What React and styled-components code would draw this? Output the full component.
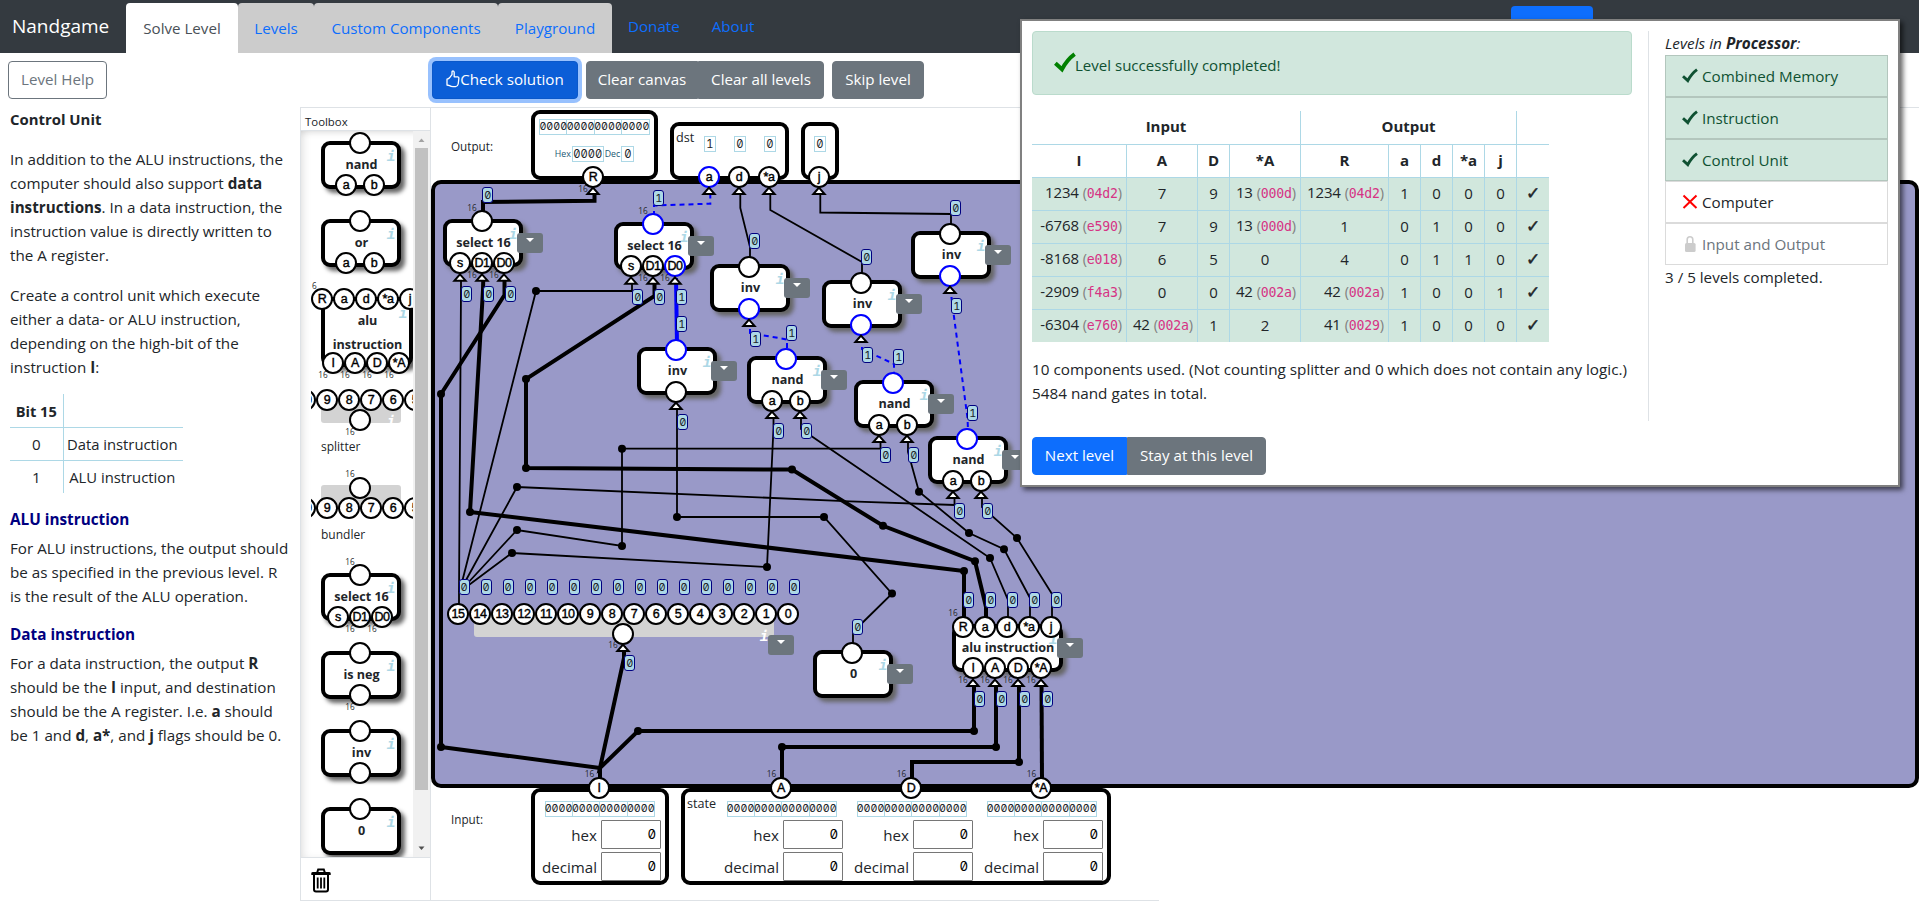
import React from "react";
import styled, { createGlobalStyle, css } from "styled-components";

const SANS = `"Open Sans", "Noto Sans", sans-serif`;
const MONO = `"DejaVu Sans Mono", monospace`;
const DIGITS = `Inter, "DejaVu Sans Mono", monospace`;

const Global = createGlobalStyle`
  *, *::before, *::after { box-sizing: border-box; }
  body {
    margin: 0;
    background: #fff;
    color: #212529;
    font: 15.15px/24px ${SANS};
    overflow: hidden;
  }
  p { margin: 0; }
  button { font: inherit; margin: 0; }
`;

const Page = styled.div`
  position: relative;
  display: flex;
  flex-direction: column;
  width: 1919px;
  height: 904px;
  overflow: hidden;
`;

/* ---------- header ---------- */

const Header = styled.header`
  display: flex;
  flex: none;
  height: 53px;
  padding-top: 3px;
  background: #343a40;
`;

const Brand = styled.div`
  width: 126px;
  padding-left: 12px;
  font-size: 19px;
  line-height: 46px;
  color: #fff;
  white-space: nowrap;
`;

const Tab = styled.div`
  width: ${(p) => p.$w}px;
  height: 50px;
  border-radius: 4px 4px 0 0;
  background: ${(p) => (p.$active ? "#fff" : "#ccc")};
  color: ${(p) => (p.$active ? "#495057" : "#0d6efd")};
  line-height: 50px;
  text-align: center;
  white-space: nowrap;
`;

const NavLink = styled.a`
  padding: 0 16px;
  line-height: 46px;
  color: #0d6efd;
`;

const NavButton = styled.div`
  width: 82px;
  height: 38px;
  margin: 3px 326px 0 auto;
  border-radius: 4px;
  background: #0d6efd;
`;

/* ---------- toolbar ---------- */

const Toolbar = styled.div`
  display: flex;
  flex: none;
  align-items: flex-start;
  height: 54px;
  padding: 8px 0 0 8px;
`;

const Button = styled.button`
  display: flex;
  align-items: center;
  justify-content: center;
  width: ${(p) => p.$w}px;
  height: 38px;
  padding: 0 0 2px;
  border: 1px solid #6c757d;
  border-radius: 4px;
  background: #6c757d;
  color: #fff;
  white-space: nowrap;
  ${(p) => p.$kind === "outline" && css`background: #fff; color: #6c757d;`}
  ${(p) => p.$kind === "primary" && css`background: #0d6efd; border-color: #0d6efd;`}
  ${(p) => p.$kind === "focused" && css`
    background: #0b5ed7;
    border-color: #0a58ca;
    box-shadow: 0 0 0 4px rgba(49, 132, 253, 0.5);
  `}
`;

const ButtonGroup = styled.div`
  display: flex;
  margin-left: ${(p) => p.$ml || 0}px;
  ${Button}:not(:last-child) { border-radius: 4px 0 0 4px; }
  ${Button}:not(:first-child) { border-radius: 0 4px 4px 0; }
`;

/* ---------- description ---------- */

const Main = styled.main`
  display: flex;
  flex: none;
  height: 794px;
`;

const Help = styled.section`
  flex: none;
  width: 300px;
  padding: 0 0 0 10px;
  white-space: nowrap;
`;

const HelpTitle = styled.h1`
  margin: 0 0 16px;
  font-size: 14.9px;
  line-height: 24px;
`;

const HelpHeading = styled.h2`
  margin: ${(p) => p.$mt}px 0 5px;
  font-size: 15.3px;
  line-height: 24px;
  color: navy;
`;

const Para = styled.p`
  margin-bottom: ${(p) => p.$mb || 0}px;
  font-size: 15.2px;
  line-height: 24px;
`;

const BitTable = styled.table`
  border-collapse: collapse;
  th, td {
    height: 33px;
    padding: 0 4px;
    line-height: 24px;
    text-align: center;
    border-bottom: 1px solid lightblue;
  }
  tr:last-child td { border-bottom: 0; }
  th:first-child, td:first-child { width: 53px; border-right: 1px solid lightblue; }
  td:last-child { width: 120px; padding: 0 5px 0 3px; font-size: 14.8px; }
  th { padding-top: 2px; font-size: 14.6px; }
`;

/* ---------- toolbox ---------- */

const ToolboxPanel = styled.aside`
  display: flex;
  flex: none;
  flex-direction: column;
  width: 131px;
  height: 794px;
  border: 1px solid #dee2e6;
`;

const ToolboxTitle = styled.div`
  height: 23px;
  padding-left: 4px;
  border-bottom: 1px solid #dee2e6;
  font-size: 11.4px;
  line-height: 27px;
`;

const ToolScroll = styled.div`
  display: flex;
  height: 726px;
  box-shadow: inset 5px 0 8px -3px rgba(0, 0, 0, 0.12), inset 0 6px 8px -6px rgba(0, 0, 0, 0.15);
`;

const ToolList = styled.div`
  position: relative;
  width: 102px;
  margin-left: 10px;
  overflow: hidden;
`;

const Scrollbar = styled.div`
  display: flex;
  flex-direction: column;
  justify-content: space-between;
  align-items: flex-end;
  width: 17px;
  background: #f1f1f1;
`;

const ScrollThumb = styled.div`
  width: 13px;
  height: 642px;
  margin-right: 2px;
  background: #c1c1c1;
`;

const ScrollArrow = styled.svg`
  display: block;
  width: 17px;
  height: ${(p) => p.$h}px;
  flex: none;
`;

const ToolLabel = styled.div`
  position: absolute;
  left: 10px;
  top: ${(p) => p.$y}px;
  font-size: 12px;
  line-height: 18px;
`;

const Bin = styled.div`
  display: flex;
  align-items: flex-start;
  flex: 1;
  padding: 10px 0 0 10px;
  border-top: 1px solid #dee2e6;
`;

/* ---------- circuit parts ---------- */

const Body = styled.div`
  position: absolute;
  left: ${(p) => p.$x}px;
  top: ${(p) => p.$y}px;
  width: ${(p) => p.$w}px;
  height: ${(p) => p.$h}px;
  border: 4px solid #000;
  border-radius: 9px;
  background: #fff;
  box-shadow: 4px 4px 4px #666;
`;

const Strip = styled.div`
  position: absolute;
  left: ${(p) => p.$x}px;
  top: ${(p) => p.$y}px;
  width: ${(p) => p.$w}px;
  height: ${(p) => p.$h}px;
  border-radius: 3px;
  background: #d3d3d3;
`;

const Caption = styled.div`
  position: absolute;
  left: ${(p) => p.$x - 65}px;
  top: ${(p) => p.$y - 12}px;
  width: 130px;
  font-size: 12.6px;
  line-height: 24px;
  font-weight: 700;
  text-align: center;
  white-space: pre;
`;

const Info = styled.div`
  position: absolute;
  left: ${(p) => p.$x - 6}px;
  top: ${(p) => p.$y - 9}px;
  width: 12px;
  font: italic 700 14.5px/18px ${MONO};
  color: ${(p) => p.$c || "lightblue"};
  text-align: center;
`;

const Pin = styled.div`
  position: absolute;
  left: ${(p) => Math.round(p.$x - 11)}px;
  top: ${(p) => Math.round(p.$y - 10.5)}px;
  width: 22px;
  height: 22px;
  border: 2px solid ${(p) => (p.$on ? "#00f" : "#000")};
  border-radius: 50%;
  background: #fff;
  color: #000;
  font: 12.5px/18px "Liberation Sans", Arial, sans-serif;
  letter-spacing: -0.4px;
  -webkit-text-stroke: 0.4px #000;
  display: flex;
  justify-content: center;
  white-space: nowrap;
`;

const Width16 = styled.div`
  position: absolute;
  left: ${(p) => p.$x - 10}px;
  top: ${(p) => p.$y - 6}px;
  width: 20px;
  font-size: 8.2px;
  line-height: 12px;
  color: #212529;
  text-align: center;
`;

const Value = styled.div`
  position: absolute;
  left: ${(p) => p.$x}px;
  top: ${(p) => p.$y}px;
  width: 11px;
  height: 16px;
  border: 1px solid navy;
  border-radius: 3px;
  background: lightblue;
  color: #212529;
  font: 11px/14px ${DIGITS};
  font-feature-settings: "zero", "tnum";
  display: flex;
  justify-content: center;
`;

const MenuButton = styled.div`
  position: absolute;
  left: ${(p) => p.$x}px;
  top: ${(p) => p.$y}px;
  width: 26px;
  height: 20px;
  padding: 5px 0 0 9px;
  border-radius: 3px;
  background: #6c757d;
  &::after {
    content: "";
    display: block;
    width: 0;
    border: 4px solid transparent;
    border-top-color: #fff;
    border-bottom: 0;
  }
`;

function Part({ x, y, w = 80, h = 48, name, capY = 24, outs = [], ins = [], menu, wired, infoY = 15 }) {
  const cx = x + 39;
  const top = y + 1.9;
  const bottom = y + h - 4.3;
  return (
    <>
      <Body $x={x} $y={y} $w={w} $h={h} />
      <Info $x={x + w - 10} $y={y + infoY}>i</Info>
      <Caption $x={x + w / 2 + 0.5} $y={y + capY}>{name}</Caption>
      {menu && <MenuButton $x={x + w - 6} $y={y + 14} />}
      {outs.map((o, i) => (
        <React.Fragment key={i}>
          {o.wide && <Width16 $x={(o.x ?? cx) - 10} $y={top - 13}>{o.wide}</Width16>}
          <Pin $x={o.x ?? cx} $y={top} $on={o.on}>{o.t}</Pin>
          {wired && <Value $x={(o.x ?? cx) + 0.3} $y={top - 33.7}>{o.on ? 1 : 0}</Value>}
        </React.Fragment>
      ))}
      {ins.map((o, i) => (
        <React.Fragment key={i}>
          {o.wide && <Width16 $x={(o.x ?? cx) - 10} $y={bottom + 12.5}>{o.wide}</Width16>}
          <Pin $x={o.x ?? cx} $y={bottom} $on={o.on}>{o.t}</Pin>
          {wired && <Value $x={(o.x ?? cx) + 1.4} $y={bottom + 23}>{o.on ? 1 : 0}</Value>}
        </React.Fragment>
      ))}
    </>
  );
}

/* ---------- workspace ---------- */

const Workspace = styled.section`
  display: flex;
  flex-direction: column;
  position: relative;
  width: 1488px;
  height: 794px;
  border-top: 1px solid #dee2e6;
`;

const BottomLine = styled.div`
  width: 728px;
  height: 1px;
  margin-top: 14px;
  background: #dee2e6;
`;

const TerminalRow = styled.div`
  display: flex;
  flex: none;
  align-items: ${(p) => (p.$top ? "flex-start" : "flex-end")};
  height: ${(p) => p.$h}px;
`;

const RowLabel = styled.div`
  width: 100px;
  padding-left: 20px;
  align-self: ${(p) => (p.$top ? "flex-start" : "auto")};
  margin: ${(p) => (p.$top ? "22px 0 0" : "0 0 25px")};
  font-size: 11.7px;
  line-height: 18px;
`;

const TerminalBox = styled.div`
  display: flex;
  width: ${(p) => p.$w}px;
  height: ${(p) => p.$h}px;
  margin-left: ${(p) => p.$ml || 0}px;
  border: 4px solid #000;
  border-radius: 9px;
  background: #fff;
`;

const OutputContent = styled.div`
  display: flex;
  flex-direction: column;
  align-items: center;
  width: 100%;
  padding-top: ${(p) => p.$pt || 5}px;
`;

const SmallRow = styled.div`
  display: flex;
  align-items: center;
  gap: 1px;
  margin-top: 7px;
  font-size: 8.8px;
  color: #1b5873;
`;

const Digits = styled.span`
  display: flex;
  justify-content: center;
  width: ${(p) => p.$w}px;
  height: 16px;
  border: 1px solid lightblue;
  color: #212529;
  font: 11.2px/14px ${DIGITS};
  font-feature-settings: "zero", "tnum";
`;

const BitRow = styled.div`
  display: flex;
  ${Digits} { font-size: 10.7px; }
  ${Digits} + ${Digits} { border-left: 0; }
`;

const GroupName = styled.div`
  width: ${(p) => p.$w}px;
  padding-left: 2px;
  margin-top: ${(p) => p.$mt || 0}px;
  font-size: 12.6px;
  line-height: 24px;
`;

const FlagRow = styled.div`
  display: flex;
  gap: 18px;
  padding-top: 10px;
`;

const Board = styled.div`
  position: relative;
  flex: none;
  width: 1488px;
  height: 608px;
  border: 4px solid #000;
  border-radius: 10px;
  background: #9999c8;
`;

const Wires = styled.svg`
  position: absolute;
  left: -4px;
  top: -4px;
  overflow: visible;
`;

const Shift = styled.div`
  position: absolute;
  left: -435px;
  top: -184px;
`;

const InputColumn = styled.div`
  display: flex;
  flex-direction: column;
  align-items: flex-end;
  width: 130px;
  padding: 9px 4px 0 0;
  ${BitRow} { margin-right: 6px; }
`;

const Field = styled.label`
  display: flex;
  align-items: center;
  gap: 4px;
  height: 29px;
  margin-top: 3px;
  font-size: 15.1px;
  line-height: 24px;
`;

const FieldValue = styled.span`
  display: block;
  width: 60px;
  height: 29px;
  padding-right: 4px;
  border: 1px solid #767676;
  border-radius: 1px;
  background: #fff;
  color: #000;
  font: 13.3px/27px ${DIGITS};
  font-feature-settings: "zero", "tnum";
  text-align: right;
`;

function Bits({ w = 28 }) {
  return (
    <BitRow>
      {[0, 1, 2, 3].map((i) => (
        <Digits key={i} $w={i ? w - 0.5 : w}>0000</Digits>
      ))}
    </BitRow>
  );
}

function NumberInput() {
  return (
    <InputColumn>
      <Bits />
      <Field>hex<FieldValue>0</FieldValue></Field>
      <Field>decimal<FieldValue>0</FieldValue></Field>
    </InputColumn>
  );
}

const THICK = [
  "483,214 483,202 594.5,200.7 594.5,192",
  "483.3,278 483,290 470,512 964,571 964,618",
  "504.5,278 504.5,295 441,394 441,747 600,768 600,780",
  "654.5,280 654.5,296 526,379 526,468 792,469.6 883,525.8 975,561.2 986,607 986,618",
  "624,646 624,658 600,768 638,731 974,731 974,681",
  "782,780 782,747 996,747 996,681",
  "912,780 912,762 1019,762 1019,681",
  "1042,780 1041.5,681",
];
const THIN = [
  "740.3,192 740.3,208 750,247 750,260",
  "770.3,192 770.3,210 862,262 862,276",
  "820.3,192 820.3,212.5 951,214 951,226",
  "461,280 461,290 459,592 459,605",
  "632,282 632,291 536,291 459.5,592",
  "677,406 677,517 824,517 892,593.6 853,632 853,645",
  "773.5,414 773.5,428 767,567 512,553 459.5,592",
  "801,414 801,429 990,558 1008,600 1008,618",
  "880.5,440 880.5,448.7 622,448.7 622,546 517,530 459.5,592",
  "908,440 908,452 919,491.7 969,533 1004,549.2 1030,598 1030,618",
  "954.5,495 954.5,505 850,501.3 517,487 459.5,592",
  "982,495 982,507 1017,538 1052,594 1052,618",
];
const DASHED = [
  "654,216 654,205.5 710.3,203.7 710.3,192",
  "750,320 750,333 787,339.5 787,350",
  "862,338 862,349 894,364 894,375",
  "951,288 951.5,298 967.5,418 968,430",
];
const JOINTS = [
  [470, 512], [964, 571], [441, 394], [441, 747], [526, 379], [526, 468], [792, 469.6],
  [883, 525.8], [975, 561.2], [638, 731], [974, 731], [782, 747], [996, 747], [1019, 762],
  [536, 291], [677, 517], [824, 517], [892, 593.6], [767, 567], [512, 553], [990, 558],
  [622, 448.7], [622, 546], [517, 530], [919, 491.7], [969, 533], [1004, 549.2],
  [517, 487], [1017, 538],
];
const ARROWS = [
  [593, 176], [709, 176], [739, 176], [769, 176], [819, 176],
  [460, 262.7], [482, 262.7], [504, 262.7], [631, 265.7], [653, 265.7], [675, 265.7],
  [749, 308], [861, 324], [950, 275], [676, 391], [772, 400], [800, 400],
  [879, 424], [907, 424], [953, 480], [981, 480],
  [973, 668], [995, 668], [1018, 668], [1041, 668], [623, 633],
];

const PARTS = [
  { x: 443, y: 219, name: "select 16", outs: [{ wide: 16 }], ins: [{ x: 460, t: "s" }, { x: 482, t: "D1", wide: 16 }, { x: 504, t: "D0", wide: 16 }] },
  { x: 614, y: 222, name: "select 16", outs: [{ on: 1, wide: 16 }], ins: [{ x: 631, t: "s" }, { x: 653, t: "D1", wide: 16 }, { x: 675, t: "D0", on: 1, wide: 16 }] },
  { x: 710, y: 264.3, name: "inv", outs: [{}], ins: [{ on: 1 }] },
  { x: 822, y: 280.3, name: "inv", outs: [{}], ins: [{ on: 1 }] },
  { x: 911, y: 231.3, name: "inv", outs: [{}], ins: [{ on: 1 }] },
  { x: 637, y: 347.3, name: "inv", outs: [{ on: 1 }], ins: [{}] },
  { x: 747, y: 356.3, name: "nand", outs: [{ on: 1 }], ins: [{ x: 772, t: "a" }, { x: 800, t: "b" }] },
  { x: 854, y: 380.3, name: "nand", outs: [{ on: 1 }], ins: [{ x: 879, t: "a" }, { x: 907, t: "b" }] },
  { x: 928, y: 436.3, name: "nand", outs: [{ on: 1 }], ins: [{ x: 953, t: "a" }, { x: 981, t: "b" }] },
  { x: 813, y: 650.3, name: "0", outs: [{}] },
  {
    x: 952, y: 624.1, w: 111, name: "alu instruction",
    outs: [{ x: 963, t: "R", wide: 16 }, { x: 985, t: "a" }, { x: 1007, t: "d" }, { x: 1029, t: "*a" }, { x: 1051, t: "j" }],
    ins: [{ x: 973, t: "I", wide: 16 }, { x: 995, t: "A", wide: 16 }, { x: 1018, t: "D", wide: 16 }, { x: 1041, t: "*A", wide: 16 }],
  },
];

function Splitter() {
  const pins = Array.from({ length: 16 }, (_, i) => 15 - i);
  return (
    <>
      <Strip $x={474} $y={613} $w={300} $h={24} />
      <Info $x={764} $y={636} $c="#fff">i</Info>
      {pins.map((n, i) => (
        <React.Fragment key={n}>
          <Pin $x={458 + i * 22} $y={613}>{n}</Pin>
          <Value $x={458.6 + i * 22} $y={579.2}>0</Value>
        </React.Fragment>
      ))}
      <Width16 $x={613} $y={645}>16</Width16>
      <Pin $x={623} $y={633} />
      <Value $x={624.3} $y={655.4}>0</Value>
      <MenuButton $x={768} $y={635} />
    </>
  );
}

function Diagram() {
  return (
    <>
      <Wires width="1488" height="608" viewBox="431 180 1488 608" fill="none" stroke="#000">
        {THIN.map((p) => <polyline key={p} points={p} strokeWidth="1.8" />)}
        {THICK.map((p) => <polyline key={p} points={p} strokeWidth="4" />)}
        {DASHED.map((p) => <polyline key={p} points={p} stroke="#00f" strokeWidth="2" strokeDasharray="5 4" />)}
        <polyline points="676,278 677,345" stroke="#00f" strokeWidth="4" />
        {JOINTS.map(([x, y]) => <circle key={x + "," + y} cx={x} cy={y} r="4" fill="#000" stroke="none" />)}
      </Wires>
      <Shift>
        {PARTS.map((p, i) => <Part key={i} {...p} menu wired />)}
        <Splitter />
        <Width16 $x={583} $y={188.5}>16</Width16>
        <Pin $x={593} $y={176}>R</Pin>
        <Pin $x={709} $y={176} $on>a</Pin>
        <Pin $x={739} $y={176}>d</Pin>
        <Pin $x={769} $y={176}>*a</Pin>
        <Pin $x={819} $y={176}>j</Pin>
        {[[599, "I"], [781, "A"], [911, "D"], [1041, "*A"]].map(([x, t]) => (
          <React.Fragment key={t}>
            <Width16 $x={x - 9.5} $y={774}>16</Width16>
            <Pin $x={x} $y={787}>{t}</Pin>
          </React.Fragment>
        ))}
      </Shift>
      <Wires width="1488" height="608" viewBox="431 180 1488 608" fill="#fff" stroke="#000" strokeWidth="2">
        {ARROWS.map(([x, y]) => (
          <path key={x + "," + y} d={`M${x} ${y + 11.6}L${x + 5.6} ${y + 18}H${x - 5.6}Z`} />
        ))}
      </Wires>
    </>
  );
}

/* ---------- result dialog ---------- */

const Dialog = styled.div`
  position: absolute;
  left: 1020px;
  top: 19px;
  display: flex;
  width: 880px;
  height: 468px;
  padding: 10px;
  border: 2px solid #808080;
  background: #fff;
  box-shadow: 3px 3px 5px rgba(0, 0, 0, 0.6);
`;

const DialogMain = styled.div`
  width: 600px;
`;

const DialogSide = styled.div`
  width: 240px;
  height: 390px;
  margin-left: 16px;
  padding: 1px 0 0 16px;
  border-left: 1px solid #dee2e6;
`;

const Alert = styled.div`
  display: flex;
  align-items: center;
  height: 64px;
  padding: 0 0 0 21px;
  margin-bottom: 16px;
  border: 1px solid #badbcc;
  border-radius: 4px;
  background: #d1e7dd;
  color: #0f5132;
  font-size: 15.05px;
  span { margin-left: -1px; padding-top: 4px; }
`;

const ResultTable = styled.table`
  table-layout: fixed;
  width: 517px;
  border-collapse: collapse;
  th, td {
    height: 33px;
    padding: 0 4px 2px;
    border-bottom: 1px solid lightblue;
    border-right: 1px solid lightblue;
    line-height: 24px;
    white-space: nowrap;
    text-align: center;
  }
  th:last-child, td:last-child { border-right: 0; }
  tbody tr:last-child td { border-bottom: 0; }
  tbody td { background: #d1e7dd; }
  th { font-size: 15px; }
`;

const Cell = styled.td`
  && { text-align: ${(p) => (p.$hex ? "right" : "center")}; font-size: 15px; letter-spacing: -0.1px; }
  small { font-size: 14.5px; color: #808080; }
  code { font: 13.2px ${MONO}; color: #d63384; letter-spacing: -0.2px; }
`;

const CheckCell = styled.td`
  font: 17px/24px "DejaVu Sans", sans-serif;
  -webkit-text-stroke: 0.5px #212529;
`;

const Summary = styled.p`
  margin: 15px 0 32px;
  font-size: 15.28px;
  line-height: 24px;
  white-space: nowrap;
`;

const SideTitle = styled.div`
  font-style: italic;
  font-size: 15.3px;
  letter-spacing: 0.02px;
  line-height: 23px;
  white-space: nowrap;
`;

const LevelItem = styled.div`
  display: flex;
  align-items: center;
  gap: 4px;
  width: 223px;
  height: 42px;
  padding-left: 16px;
  border: 1px solid rgba(0, 0, 0, 0.14);
  background: ${(p) => (p.$done ? "#d1e7dd" : "#fff")};
  color: ${(p) => (p.$done ? "#0f5132" : p.$locked ? "#6c757d" : "#212529")};
  font-size: 15.2px;
`;

const TickIcon = ({ size = 16, color = "#0f5132" }) => (
  <svg width={size} height={size} viewBox="0 0 16 16" fill="none" stroke={color} strokeWidth="2.9">
    <path d="M1 8.2L5.8 12.6C8 8.5 11 4.5 15 1.6" strokeLinejoin="miter" />
  </svg>
);
const CrossIcon = () => (
  <svg width="16" height="16" viewBox="0 0 16 16" stroke="red" strokeWidth="2">
    <path d="M1.5 1.5L14.5 14M14.5 1.5L1.5 14" />
  </svg>
);
const LockIcon = () => (
  <svg width="16" height="18" viewBox="0 0 16 18">
    <path d="M5.2 9V4.6a2.8 2.8 0 0 1 5.6 0V9" fill="none" stroke="#ccc" strokeWidth="1.6" />
    <rect x="3" y="8" width="10.6" height="9" rx="1.5" fill="#ccc" />
  </svg>
);
const ThumbIcon = () => (
  <svg width="14" height="18" viewBox="0 0 14 18" fill="none" stroke="#fff" strokeWidth="1.3" strokeLinejoin="round">
    <path d="M1 9.2Q2.6 8.8 4 7.2L6 4.6V2Q6 .9 7 .9Q8.2 1 8.2 2.6V6.8H11.8Q13 7 12.9 8.2L12.2 14Q11.8 16.4 9.6 16.6H7Q5 16.6 3.6 15.6L1 15Z" />
  </svg>
);
const TrashIcon = () => (
  <svg width="20" height="25" viewBox="0 0 20 25" fill="none" stroke="#000">
    <path d="M6.2 4.5L7.2 1.5H12.8L13.8 4.5" strokeWidth="2" />
    <path d="M.3 7V5Q.5 4 2 4H18Q19.5 4 19.7 5V7Z" fill="#000" stroke="none" />
    <path d="M3 7V21.6Q3 23.5 5 23.5H15Q17 23.5 17 21.6V7" strokeWidth="2" />
    <path d="M6.7 9.5V20.5M10 9.5V20.5M13.3 9.5V20.5" strokeWidth="1.8" />
  </svg>
);

const ROWS = [
  [["1234", "04d2"], "7", "9", ["13", "000d"], ["1234", "04d2"], "1", "0", "0", "0"],
  [["-6768", "e590"], "7", "9", ["13", "000d"], "1", "0", "1", "0", "0"],
  [["-8168", "e018"], "6", "5", "0", "4", "0", "1", "1", "0"],
  [["-2909", "f4a3"], "0", "0", ["42", "002a"], ["42", "002a"], "1", "0", "0", "1"],
  [["-6304", "e760"], ["42", "002a"], "1", "2", ["41", "0029"], "1", "0", "0", "0"],
];

function ResultDialog() {
  return (
    <Dialog>
      <DialogMain>
        <Alert><TickIcon size={22} color="green" /><span>Level successfully completed!</span></Alert>
        <ResultTable>
          <colgroup>
            {[94.5, 71, 32, 71, 88, 32, 32, 32, 32, 32.5].map((w, i) => <col key={i} width={w} />)}
          </colgroup>
          <thead>
            <tr><th colSpan={4}>Input</th><th colSpan={5}>Output</th><th /></tr>
            <tr>{["I", "A", "D", "*A", "R", "a", "d", "*a", "j", ""].map((h) => <th key={h}>{h}</th>)}</tr>
          </thead>
          <tbody>
            {ROWS.map((r, i) => (
              <tr key={i}>
                {r.map((c, j) =>
                  Array.isArray(c)
                    ? <Cell key={j} $hex>{c[0]} <small>(<code>{c[1]}</code>)</small></Cell>
                    : <Cell key={j}>{c}</Cell>
                )}
                <CheckCell>✓</CheckCell>
              </tr>
            ))}
          </tbody>
        </ResultTable>
        <Summary>
          10 components used. (Not counting splitter and 0 which does not contain any logic.)<br />
          5484 nand gates in total.
        </Summary>
        <ButtonGroup>
          <Button $w={95} $kind="primary">Next level</Button>
          <Button $w={139}>Stay at this level</Button>
        </ButtonGroup>
      </DialogMain>
      <DialogSide>
        <SideTitle>Levels in <b>Processor</b>:</SideTitle>
        <LevelItem $done><TickIcon />Combined Memory</LevelItem>
        <LevelItem $done><TickIcon />Instruction</LevelItem>
        <LevelItem $done><TickIcon />Control Unit</LevelItem>
        <LevelItem><CrossIcon />Computer</LevelItem>
        <LevelItem $locked><LockIcon />Input and Output</LevelItem>
        <Para>3 / 5 levels completed.</Para>
      </DialogSide>
    </Dialog>
  );
}

function Toolbox() {
  const strip = ["10", "9", "8", "7", "6", "5"];
  return (
    <ToolboxPanel>
      <ToolboxTitle>Toolbox</ToolboxTitle>
      <ToolScroll>
        <ToolList>
          <Part x={10} y={10} name="nand" outs={[{}]} ins={[{ x: 35, t: "a" }, { x: 63, t: "b" }]} />
          <Part x={10} y={88} name="or" outs={[{}]} ins={[{ x: 35, t: "a" }, { x: 63, t: "b" }]} />
          <Part
            x={10} y={166} w={92} h={70} name={"alu\ninstruction"} infoY={16}
            outs={[{ x: 11, t: "R", wide: "16" }, { x: 33, t: "a" }, { x: 55, t: "d" }, { x: 77, t: "*a" }, { x: 99, t: "j" }]}
            ins={[{ x: 22, t: "I", wide: 16 }, { x: 44, t: "A", wide: 16 }, { x: 66, t: "D", wide: 16 }, { x: 88, t: "*A", wide: 16 }]}
          />
          <Strip $x={10} $y={268} $w={80} $h={24} />
          <Info $x={80} $y={290} $c="#fff">i</Info>
          {strip.map((t, i) => <Pin key={t} $x={-6 + i * 22} $y={268}>{t}</Pin>)}
          <Pin $x={49} $y={288} />
          <Width16 $x={39} $y={300.5}>16</Width16>
          <ToolLabel $y={307}>splitter</ToolLabel>
          <Width16 $x={39} $y={343}>16</Width16>
          <Strip $x={10} $y={354} $w={80} $h={24} />
          <Pin $x={49} $y={356} />
          {strip.map((t, i) => <Pin key={t} $x={-6 + i * 22} $y={376}>{t}</Pin>)}
          <ToolLabel $y={395}>bundler</ToolLabel>
          <Part x={10} y={442} name="select 16" outs={[{ wide: 16 }]} ins={[{ x: 27, t: "s" }, { x: 49, t: "D1", wide: 16 }, { x: 71, t: "D0", wide: 16 }]} />
          <Part x={10} y={520} name="is neg" outs={[{}]} ins={[{ wide: 16 }]} />
          <Part x={10} y={598} name="inv" outs={[{}]} ins={[{}]} />
          <Part x={10} y={676} name="0" outs={[{}]} />
        </ToolList>
        <Scrollbar>
          <ScrollArrow $h={17} viewBox="0 0 17 17"><path d="M5.5 11L8.5 7.5L11.5 11Z" fill="#a3a3a3" /></ScrollArrow>
          <ScrollThumb />
          <ScrollArrow $h={67} viewBox="0 0 17 67"><path d="M5.5 56.5L8.5 60L11.5 56.5Z" fill="#505050" /></ScrollArrow>
        </Scrollbar>
      </ToolScroll>
      <Bin><TrashIcon /></Bin>
    </ToolboxPanel>
  );
}

export default function App() {
  return (
    <Page>
      <Global />
      <Header>
        <Brand>Nandgame</Brand>
        <Tab $w={112} $active>Solve Level</Tab>
        <Tab $w={76}>Levels</Tab>
        <Tab $w={184}>Custom Components</Tab>
        <Tab $w={114}>Playground</Tab>
        <NavLink>Donate</NavLink>
        <NavLink>About</NavLink>
        <NavButton />
      </Header>
      <Toolbar>
        <Button $w={99} $kind="outline">Level Help</Button>
        <ButtonGroup $ml={325}><Button $w={146} $kind="focused"><ThumbIcon />Check solution</Button></ButtonGroup>
        <ButtonGroup $ml={8}>
          <Button $w={112}>Clear canvas</Button>
          <Button $w={126}>Clear all levels</Button>
        </ButtonGroup>
        <ButtonGroup $ml={8}><Button $w={92}>Skip level</Button></ButtonGroup>
      </Toolbar>
      <Main>
        <Help>
          <HelpTitle>Control Unit</HelpTitle>
          <Para $mb={16}>
            In addition to the ALU instructions, the<br />
            computer should also support <b>data<br />
            instructions</b>. In a data instruction, the<br />
            instruction value is directly written to<br />
            the A register.
          </Para>
          <Para $mb={15}>
            Create a control unit which execute<br />
            either a data- or ALU instruction,<br />
            depending on the high-bit of the<br />
            instruction <b>I</b>:
          </Para>
          <BitTable>
            <tbody>
              <tr><th>Bit 15</th><th /></tr>
              <tr><td>0</td><td>Data instruction</td></tr>
              <tr><td>1</td><td>ALU instruction</td></tr>
            </tbody>
          </BitTable>
          <HelpHeading $mt={14}>ALU instruction</HelpHeading>
          <Para>
            For ALU instructions, the output should<br />
            be as specified in the previous level. R<br />
            is the result of the ALU operation.
          </Para>
          <HelpHeading $mt={14}>Data instruction</HelpHeading>
          <Para>
            For a data instruction, the output <b>R</b><br />
            should be the <b>I</b> input, and destination<br />
            should be the A register. I.e. <b>a</b> should<br />
            be 1 and <b>d</b>, <b>a*</b>, and <b>j</b> flags should be 0.
          </Para>
        </Help>
        <Toolbox />
        <Workspace>
          <TerminalRow $h={72}>
            <RowLabel>Output:</RowLabel>
            <TerminalBox $w={127} $h={70}>
              <OutputContent>
                <Bits />
                <SmallRow>Hex<Digits $w={32}>0000</Digits>Dec<Digits $w={13}>0</Digits></SmallRow>
              </OutputContent>
            </TerminalBox>
            <TerminalBox $ml={12} $w={119} $h={58}>
              <GroupName $w={30}>dst</GroupName>
              <FlagRow><Digits $w={12}>1</Digits><Digits $w={12}>0</Digits><Digits $w={12}>0</Digits></FlagRow>
            </TerminalBox>
            <TerminalBox $ml={12} $w={38} $h={58}>
              <OutputContent $pt={10}><Digits $w={12}>0</Digits></OutputContent>
            </TerminalBox>
          </TerminalRow>
          <Board><Diagram /></Board>
          <TerminalRow $h={98} $top>
            <RowLabel $top>Input:</RowLabel>
            <TerminalBox $w={138} $h={97}><NumberInput /></TerminalBox>
            <TerminalBox $ml={12} $w={430} $h={97}>
              <GroupName $w={32}>state</GroupName>
              <NumberInput /><NumberInput /><NumberInput />
            </TerminalBox>
          </TerminalRow>
          <BottomLine />
        </Workspace>
      </Main>
      <ResultDialog />
    </Page>
  );
}
